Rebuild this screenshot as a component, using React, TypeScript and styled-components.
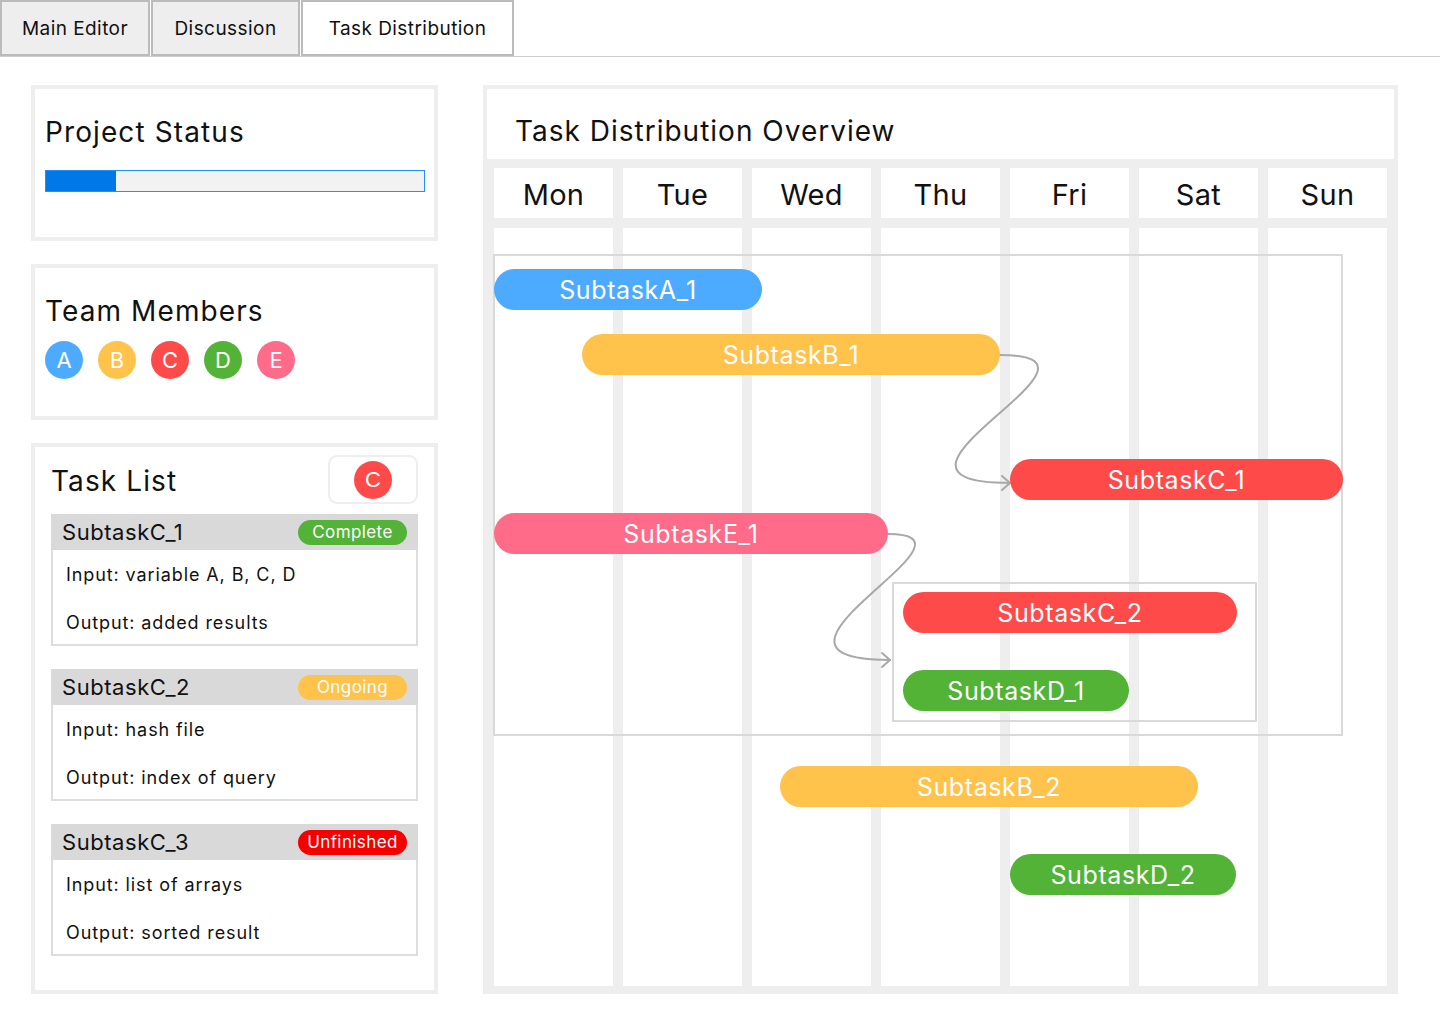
import React from 'react';
import styled, { createGlobalStyle } from 'styled-components';

const GlobalStyle = createGlobalStyle`
  * { box-sizing: border-box; }
  html, body { margin: 0; padding: 0; background: #fff; }
  body {
    font-family: Inter, "Noto Sans", sans-serif;
    color: #111;
  }
`;

const COLORS = {
  blue: '#4dabff',
  yellow: '#ffc24b',
  red: '#ff4a4a',
  green: '#52b337',
  pink: '#ff6b88',
  alert: '#f60000',
};

const Page = styled.div`
  width: 1440px;
  min-height: 1024px;
`;

const TabBar = styled.nav`
  display: flex;
  gap: 1px;
  height: 57px;
  border-bottom: 1px solid #ccc;
`;

const Tab = styled.button<{ $active?: boolean; $w: number }>`
  width: ${(p) => p.$w}px;
  height: 56px;
  margin: 0;
  padding: 0;
  border: 2px solid #bbb;
  background: ${(p) => (p.$active ? '#fff' : '#eee')};
  font-family: Inter, sans-serif;
  font-size: 19px;
  letter-spacing: 0.44px;
  color: #111;
  cursor: pointer;
`;

const Main = styled.main`
  display: flex;
  gap: 45px;
  padding: 28px 0 0 31px;
`;

const LeftColumn = styled.div`
  display: flex;
  flex-direction: column;
  gap: 23px;
  width: 407px;
`;

const Card = styled.section<{ $h: number; $pad: string }>`
  height: ${(p) => p.$h}px;
  border: 4px solid #eee;
  padding: ${(p) => p.$pad};
  display: flex;
  flex-direction: column;
`;

const CardTitle = styled.h2`
  margin: 0;
  font-size: 28px;
  line-height: 34px;
  font-weight: 400;
  letter-spacing: 1.1px;
  color: #111;
`;

const Progress = styled.div`
  margin-top: 21px;
  width: 380px;
  height: 22px;
  border: 1px solid #1e90ff;
  background: #f2f2f2;
`;

const ProgressFill = styled.div`
  height: 100%;
  background: #0078e8;
`;

const AvatarRow = styled.div`
  display: flex;
  gap: 15px;
  margin-top: 13px;
`;

const Avatar = styled.span<{ $color: string }>`
  width: 38px;
  height: 38px;
  border-radius: 50%;
  background: ${(p) => p.$color};
  color: #fff;
  font-size: 22px;
  display: flex;
  align-items: center;
  justify-content: center;
`;

const TaskHead = styled.div`
  display: flex;
  justify-content: space-between;
  align-items: center;
`;

const TaskListTitle = styled(CardTitle)`
  padding-top: 3px;
`;

const FilterButton = styled.button`
  width: 90px;
  height: 49px;
  margin: 0;
  padding: 0;
  border: 2px solid #eee;
  border-radius: 9px;
  background: #fff;
  display: flex;
  align-items: center;
  justify-content: center;
`;

const TaskItems = styled.div`
  display: flex;
  flex-direction: column;
  gap: 23px;
  margin-top: 10px;
`;

const TaskItem = styled.article`
  display: flex;
  flex-direction: column;
`;

const ItemHeader = styled.header`
  height: 36px;
  background: #d9d9d9;
  display: flex;
  align-items: center;
  justify-content: space-between;
  padding: 0 11px 0 11px;
`;

const ItemName = styled.span`
  font-size: 22px;
  letter-spacing: 0.55px;
  color: #111;
`;

const Badge = styled.span<{ $color: string }>`
  width: 109px;
  height: 25px;
  line-height: 25px;
  text-align: center;
  border-radius: 13px;
  background: ${(p) => p.$color};
  color: #fff;
  font-size: 17px;
  letter-spacing: 0.4px;
`;

const ItemBody = styled.div`
  border: 2px solid #ddd;
  border-top: none;
  padding: 13px 13px 9px;
  display: flex;
  flex-direction: column;
  gap: 24px;
`;

const ItemLine = styled.p`
  margin: 0;
  font-size: 18px;
  line-height: 24px;
  letter-spacing: 0.9px;
  color: #111;
`;

const Panel = styled.section`
  width: 915px;
  height: 909px;
  background: #eee;
  padding: 4px;
  display: flex;
  flex-direction: column;
`;

const PanelTitle = styled.h1`
  margin: 0;
  height: 70px;
  background: #fff;
  padding: 13px 0 0 28px;
  display: flex;
  align-items: center;
  font-size: 28px;
  letter-spacing: 1px;
  font-weight: 400;
  color: #111;
`;

const Week = styled.div`
  display: grid;
  grid-template-columns: repeat(7, 119px);
  grid-template-rows: 50px 758px;
  gap: 10px;
  padding: 9px 7px 4px 7px;
`;

const DayHead = styled.div`
  background: #fff;
  display: flex;
  align-items: center;
  justify-content: center;
  padding-top: 3px;
  font-size: 29px;
  letter-spacing: 0.3px;
  color: #111;
`;

const Timeline = styled.div`
  grid-column: 1 / -1;
  position: relative;
  display: grid;
  grid-template-columns: repeat(7, 119px);
  gap: 10px;
`;

const Lane = styled.div`
  background: #fff;
`;

type Box = { left: number; top: number; width: number; height?: number };

const GroupBox = styled.div.attrs<Box>((p) => ({
  style: { left: p.left, top: p.top, width: p.width, height: p.height },
}))<Box>`
  position: absolute;
  border: 2px solid #d9d9d9;
`;

const Connectors = styled.svg`
  position: absolute;
  left: 0;
  top: 0;
  width: 893px;
  height: 758px;
  overflow: visible;
  pointer-events: none;
`;

const Bar = styled.div.attrs<Box & { $color: string }>((p) => ({
  style: { left: p.left, top: p.top, width: p.width },
}))<Box & { $color: string }>`
  position: absolute;
  height: 41px;
  border-radius: 21px;
  background: ${(p) => p.$color};
  color: #fff;
  font-size: 25px;
  letter-spacing: 0.6px;
  display: flex;
  align-items: center;
  justify-content: center;
  white-space: nowrap;
`;

const members = [
  { l: 'A', c: COLORS.blue },
  { l: 'B', c: COLORS.yellow },
  { l: 'C', c: COLORS.red },
  { l: 'D', c: COLORS.green },
  { l: 'E', c: COLORS.pink },
];

const tasks = [
  { name: 'SubtaskC_1', status: 'Complete', color: COLORS.green, input: 'variable A, B, C, D', output: 'added results' },
  { name: 'SubtaskC_2', status: 'Ongoing', color: COLORS.yellow, input: 'hash file', output: 'index of query' },
  { name: 'SubtaskC_3', status: 'Unfinished', color: COLORS.alert, input: 'list of arrays', output: 'sorted result' },
];

const days = ['Mon', 'Tue', 'Wed', 'Thu', 'Fri', 'Sat', 'Sun'];

const bars = [
  { label: 'SubtaskA_1', color: COLORS.blue, left: 0, top: 41, width: 268 },
  { label: 'SubtaskB_1', color: COLORS.yellow, left: 88, top: 106, width: 418 },
  { label: 'SubtaskC_1', color: COLORS.red, left: 516, top: 231, width: 333 },
  { label: 'SubtaskE_1', color: COLORS.pink, left: 0, top: 285, width: 394 },
  { label: 'SubtaskC_2', color: COLORS.red, left: 409, top: 364, width: 334 },
  { label: 'SubtaskD_1', color: COLORS.green, left: 409, top: 442, width: 226 },
  { label: 'SubtaskB_2', color: COLORS.yellow, left: 286, top: 538, width: 418 },
  { label: 'SubtaskD_2', color: COLORS.green, left: 516, top: 626, width: 226 },
];

const tabs = [
  { label: 'Main Editor', w: 150 },
  { label: 'Discussion', w: 149 },
  { label: 'Task Distribution', w: 213, active: true },
];

export default function App() {
  return (
    <Page>
      <GlobalStyle />
      <TabBar>
        {tabs.map((t) => (
          <Tab key={t.label} $w={t.w} $active={t.active}>
            {t.label}
          </Tab>
        ))}
      </TabBar>
      <Main>
        <LeftColumn>
          <Card $h={156} $pad="26px 9px 0 10px">
            <CardTitle>Project Status</CardTitle>
            <Progress>
              <ProgressFill style={{ width: '18.5%' }} />
            </Progress>
          </Card>
          <Card $h={156} $pad="26px 9px 0 10px">
            <CardTitle>Team Members</CardTitle>
            <AvatarRow>
              {members.map((m) => (
                <Avatar key={m.l} $color={m.c}>
                  {m.l}
                </Avatar>
              ))}
            </AvatarRow>
          </Card>
          <Card $h={551} $pad="8px 16px 0 16px">
            <TaskHead>
              <TaskListTitle>Task List</TaskListTitle>
              <FilterButton>
                <Avatar $color={COLORS.red}>C</Avatar>
              </FilterButton>
            </TaskHead>
            <TaskItems>
              {tasks.map((t) => (
                <TaskItem key={t.name}>
                  <ItemHeader>
                    <ItemName>{t.name}</ItemName>
                    <Badge $color={t.color}>{t.status}</Badge>
                  </ItemHeader>
                  <ItemBody>
                    <ItemLine>Input: {t.input}</ItemLine>
                    <ItemLine>Output: {t.output}</ItemLine>
                  </ItemBody>
                </TaskItem>
              ))}
            </TaskItems>
          </Card>
        </LeftColumn>
        <Panel>
          <PanelTitle>Task Distribution Overview</PanelTitle>
          <Week>
            {days.map((d) => (
              <DayHead key={d}>{d}</DayHead>
            ))}
            <Timeline>
              {days.map((d) => (
                <Lane key={d} />
              ))}
              <GroupBox left={-1} top={26} width={850} height={482} />
              <GroupBox left={398} top={354} width={365} height={140} />
              <Connectors viewBox="0 0 893 758">
                <g fill="none" stroke="#a8a8a8" strokeWidth={2} strokeLinecap="round" strokeLinejoin="round">
                  <path d="M506 127 C 645 127, 345 255, 516 255" />
                  <path d="M508 248 L516 255 L508 262" />
                  <path d="M394 306 C 505 306, 228 432, 396 432" />
                  <path d="M388 425 L396 432 L388 439" />
                </g>
              </Connectors>
              {bars.map((b) => (
                <Bar key={b.label} $color={b.color} left={b.left} top={b.top} width={b.width}>
                  {b.label}
                </Bar>
              ))}
            </Timeline>
          </Week>
        </Panel>
      </Main>
    </Page>
  );
}
